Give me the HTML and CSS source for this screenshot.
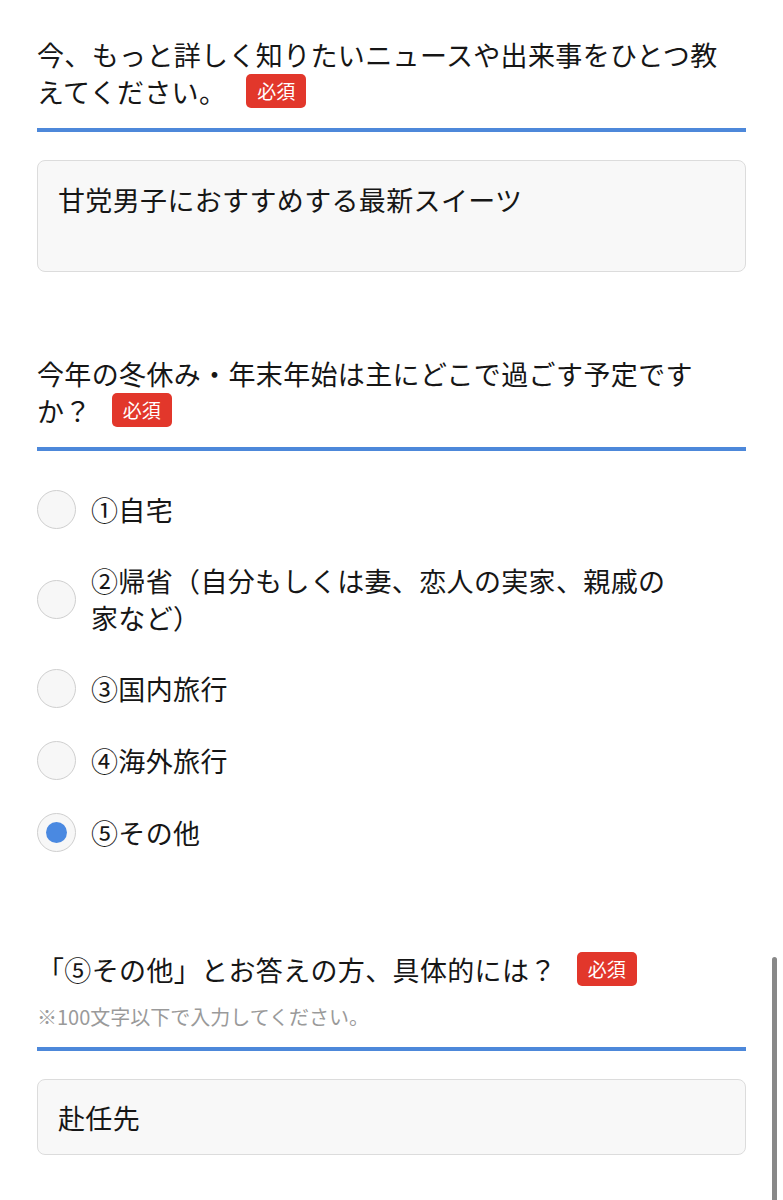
FILE: index.html
```html
<!DOCTYPE html>
<html lang="ja">
<head>
<meta charset="utf-8">
<title>アンケート</title>
<link rel="stylesheet" href="styles.css">
</head>
<body>
<main class="form">
  <section class="q">
    <div class="q-head">
      <h2 class="q-title">今、もっと詳しく知りたいニュースや出来事をひとつ教えてください。<span class="req">必須</span></h2>
    </div>
    <textarea class="field field-area" readonly>甘党男子におすすめする最新スイーツ</textarea>
  </section>

  <section class="q">
    <div class="q-head">
      <h2 class="q-title">今年の冬休み・年末年始は主にどこで過ごす予定ですか？<span class="req">必須</span></h2>
    </div>
    <div class="options">
      <label class="opt"><input type="radio" name="plan" class="radio"><span class="opt-text">①自宅</span></label>
      <label class="opt"><input type="radio" name="plan" class="radio"><span class="opt-text">②帰省（自分もしくは妻、恋人の実家、親戚の家など）</span></label>
      <label class="opt"><input type="radio" name="plan" class="radio"><span class="opt-text">③国内旅行</span></label>
      <label class="opt"><input type="radio" name="plan" class="radio"><span class="opt-text">④海外旅行</span></label>
      <label class="opt"><input type="radio" name="plan" class="radio" checked><span class="opt-text">⑤その他</span></label>
    </div>
  </section>

  <section class="q">
    <div class="q-head q-head-note">
      <h2 class="q-title">「⑤その他」とお答えの方、具体的には？<span class="req">必須</span></h2>
      <p class="q-note">※100文字以下で入力してください。</p>
    </div>
    <input class="field field-input" type="text" value="赴任先" readonly>
  </section>
</main>
<div class="scrollbar"></div>
</body>
</html>
```

FILE: styles.css
```css
html, body {
  margin: 0;
  padding: 0;
  background: #ffffff;
}

body {
  font-family: "Noto Sans CJK JP", "Noto Sans", sans-serif;
  color: #161616;
  letter-spacing: 0.35px;
  overflow: hidden;
}

.form {
  padding: 36px 37px 0 37px;
  display: flex;
  flex-direction: column;
  gap: 83px;
}

.q {
  display: flex;
  flex-direction: column;
}

.q-head {
  border-bottom: 4px solid #4d88da;
  padding-bottom: 18px;
}

.q-head-note {
  padding-bottom: 16px;
}

.q-title {
  margin: 0;
  padding-right: 20px;
  font-size: 27px;
  font-weight: 400;
  line-height: 37px;
}

.req {
  display: inline-block;
  vertical-align: top;
  margin-left: 20px;
  margin-top: 1px;
  height: 34px;
  padding: 0 11px;
  border-radius: 5px;
  background: #e2372b;
  color: #ffffff;
  font-size: 19px;
  letter-spacing: 0;
  line-height: 34px;
}

.q-note {
  margin: 15px 0 0 0;
  font-size: 20px;
  line-height: 28px;
  letter-spacing: 0;
  color: #9a9a9a;
}

.field {
  box-sizing: border-box;
  width: 100%;
  margin: 28px 0 0 0;
  border: 1px solid #dcdcdc;
  border-radius: 8px;
  background: #f8f8f8;
  font-family: inherit;
  font-size: 27px;
  letter-spacing: 0.35px;
  color: #161616;
  outline: none;
}

.field-area {
  display: block;
  height: 112px;
  padding: 20px 20px;
  line-height: 37px;
  resize: none;
  overflow: hidden;
}

.field-input {
  height: 76px;
  padding: 0 20px;
  line-height: 37px;
}

.options {
  margin-top: 39px;
  padding-bottom: 16px;
  display: flex;
  flex-direction: column;
  gap: 33px;
}

.opt {
  display: flex;
  align-items: center;
  gap: 15px;
}

.radio {
  appearance: none;
  -webkit-appearance: none;
  flex: none;
  box-sizing: border-box;
  width: 39px;
  height: 39px;
  margin: 0;
  border: 1.5px solid #cfcfcf;
  border-radius: 50%;
  background: #f7f7f7;
  display: grid;
  place-items: center;
}

.radio:checked::after {
  content: "";
  width: 21px;
  height: 21px;
  border-radius: 50%;
  background: #4a89e1;
}

.opt-text {
  max-width: 585px;
  font-size: 27px;
  line-height: 37px;
}

.scrollbar {
  position: fixed;
  right: 6px;
  top: 957px;
  bottom: -10px;
  width: 5px;
  border-radius: 3px;
  background: #888888;
}
```
